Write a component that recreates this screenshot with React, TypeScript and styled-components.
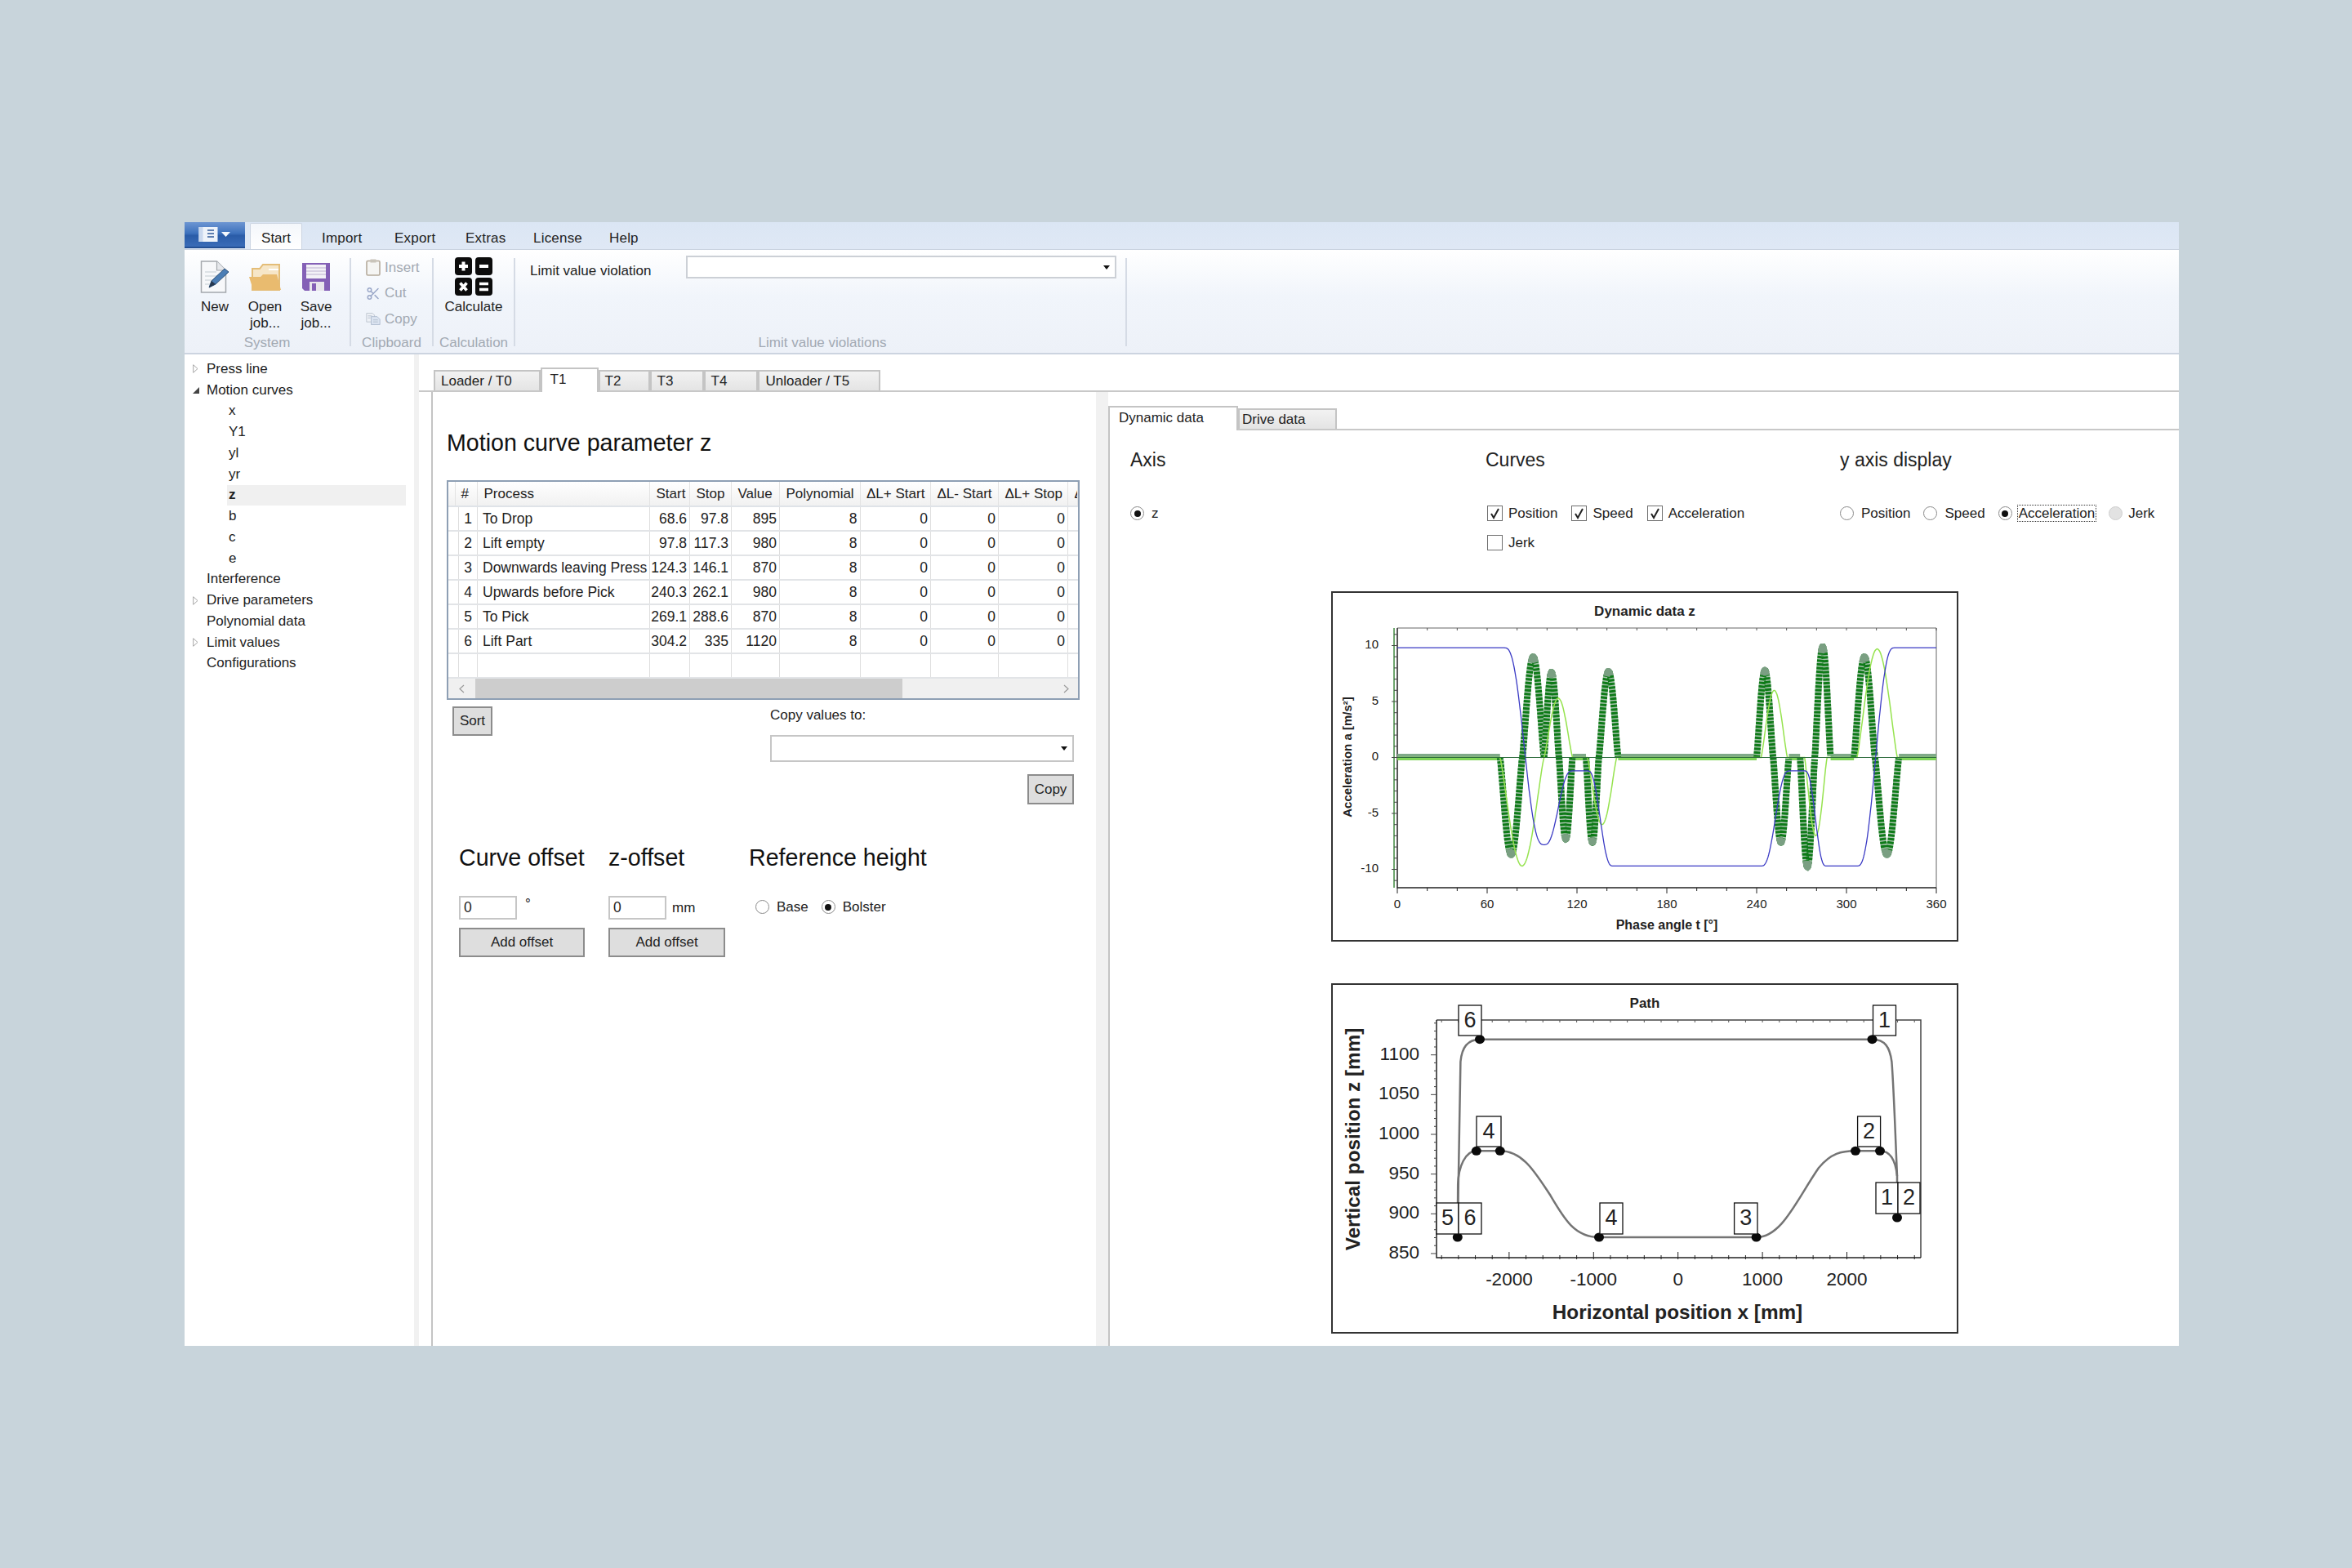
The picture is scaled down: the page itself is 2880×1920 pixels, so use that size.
import React from "react";
import styled, { createGlobalStyle } from "styled-components";
import { Scissors } from "lucide-react";

const GlobalStyle = createGlobalStyle`
  html, body { margin: 0; padding: 0; }
  body { font-family: "Liberation Sans", Arial, sans-serif; color: #222; font-size: 17px; }
  * { box-sizing: border-box; }
`;

const Page = styled.div`
  width: 2880px;
  height: 1920px;
  background: #c8d4db;
  padding: 272px 0 0 226px;
`;

const Window = styled.div`
  width: 2442px;
  height: 1376px;
  background: #fff;
  display: flex;
  flex-direction: column;
  overflow: hidden;
`;

/* ---------- ribbon ---------- */

const MenuStrip = styled.div`
  height: 34px;
  flex: none;
  display: flex;
  align-items: flex-end;
  background: linear-gradient(#dbe6f4, #dfe8f5);
  border-bottom: 1px solid #c9d3e0;
`;

const AppButton = styled.div`
  width: 74px;
  height: 32px;
  align-self: flex-start;
  display: flex;
  align-items: center;
  justify-content: center;
  background: linear-gradient(#6d96d2 0%, #3e72bd 45%, #2a5ca8 55%, #3a6cb8 100%);
  border-bottom: 2px solid #234f93;
`;

const StartTab = styled.div`
  width: 64px;
  height: 32px;
  margin: 0 24px 0 6px;
  padding-top: 5px;
  display: flex;
  align-items: center;
  justify-content: center;
  background: linear-gradient(#f4f7fb, #fff);
  border: 1px solid #ccd5e2;
  border-bottom: none;
  border-radius: 2px 2px 0 0;
`;

const MenuItem = styled.div<{ $width: number }>`
  width: ${(p) => p.$width}px;
  height: 32px;
  padding-top: 5px;
  display: flex;
  align-items: center;
  letter-spacing: 0.2px;
`;

const Ribbon = styled.div`
  height: 128px;
  flex: none;
  display: flex;
  background: linear-gradient(#ffffff 0%, #f1f5fb 45%, #edf1f8 100%);
  border-bottom: 2px solid #ccd4e0;
`;

const RibbonGroup = styled.div<{ $width: number }>`
  width: ${(p) => p.$width}px;
  flex: none;
  display: flex;
  flex-direction: column;
`;

const GroupBody = styled.div<{ $pad?: string }>`
  height: 102px;
  flex: none;
  display: flex;
  padding: ${(p) => p.$pad || "0"};
`;

const GroupLabel = styled.div<{ $pad?: number }>`
  height: 24px;
  line-height: 24px;
  text-align: center;
  color: #a2a9b3;
  padding-left: ${(p) => p.$pad || 0}px;
`;

const GroupSeparator = styled.div`
  width: 2px;
  flex: none;
  margin: 10px 0 8px;
  background: #d5dbe5;
`;

const BigButton = styled.div<{ $width: number }>`
  width: ${(p) => p.$width}px;
  flex: none;
  padding-top: 9px;
  display: flex;
  flex-direction: column;
  align-items: center;
  text-align: center;
  line-height: 20px;
`;

const BigIcon = styled.div`
  height: 47px;
  margin-bottom: 4px;
  display: flex;
  align-items: center;
`;

const SmallList = styled.div`
  display: flex;
  flex-direction: column;
`;

const SmallRow = styled.div`
  height: 31.5px;
  display: flex;
  align-items: center;
  gap: 5px;
  color: #a3a9b2;
`;

const SmallIcon = styled.span`
  width: 18px;
  height: 22px;
  display: flex;
  align-items: center;
  justify-content: center;
`;

const LimitLabel = styled.div`
  width: 191px;
  margin: 5px 0 0 18px;
  flex: none;
  height: 28px;
  line-height: 28px;
`;

const RibbonCombo = styled.div`
  width: 527px;
  height: 28px;
  background: #fff;
  border: 2px solid #ccd0d6;
  display: flex;
  align-items: center;
  justify-content: flex-end;
  padding-right: 6px;
`;

const DropArrow = styled.span`
  width: 0;
  height: 0;
  border-left: 4px solid transparent;
  border-right: 4px solid transparent;
  border-top: 5px solid #111;
`;

/* ---------- tree ---------- */

const Main = styled.div`
  flex: 1;
  display: flex;
  min-height: 0;
`;

const TreePane = styled.div`
  width: 281px;
  flex: none;
  padding-top: 5px;
`;

const TreeRow = styled.div<{ $sub?: boolean; $selected?: boolean }>`
  height: 25.75px;
  display: flex;
  align-items: center;
  margin: ${(p) => (p.$sub ? "0 10px 0 52px" : "0")};
  padding-left: ${(p) => (p.$sub ? 2 : 10)}px;
  background: ${(p) => (p.$selected ? "#f0f0f0" : "transparent")};
  font-weight: ${(p) => (p.$selected ? 700 : 400)};
`;

const TreeArrowSlot = styled.span`
  width: 17px;
  flex: none;
  display: flex;
  align-items: center;
`;

const Splitter = styled.div<{ $width: number }>`
  width: ${(p) => p.$width}px;
  flex: none;
  background: #f1f1f1;
`;

/* ---------- tabs ---------- */

const Workspace = styled.div`
  flex: 1;
  min-width: 0;
  display: flex;
  flex-direction: column;
`;

const TabBar = styled.div<{ $height: number; $pad?: number }>`
  height: ${(p) => p.$height}px;
  flex: none;
  display: flex;
  align-items: flex-end;
  padding-left: ${(p) => p.$pad || 0}px;
  border-bottom: 2px solid #c8c8c8;
`;

const Tab = styled.div<{ $active?: boolean; $width: number; $pad: number }>`
  width: ${(p) => p.$width}px;
  height: ${(p) => (p.$active ? 30 : 25)}px;
  flex: none;
  display: flex;
  align-items: center;
  padding-bottom: ${(p) => (p.$active ? 3 : 0)}px;
  padding-left: ${(p) => p.$pad}px;
  margin-bottom: ${(p) => (p.$active ? -2 : 0)}px;
  background: ${(p) => (p.$active ? "#fff" : "linear-gradient(#f2f2f2, #e4e4e4)")};
  border: 2px solid #c4c4c4;
  border-bottom: ${(p) => (p.$active ? "none" : "0")};
  position: relative;
`;

const Panes = styled.div`
  flex: 1;
  display: flex;
  min-height: 0;
`;

/* ---------- left pane ---------- */

const LeftPane = styled.div`
  width: 814px;
  margin-left: 15px;
  flex: none;
  padding: 42px 0 0 17px;
  border-left: 2px solid #c4c4c4;
`;

const PageTitle = styled.div`
  font-size: 28.6px;
  line-height: 40px;
  color: #111;
  margin-bottom: 26px;
`;

const ParamTable = styled.div`
  width: 775px;
  height: 269px;
  border: 2px solid #8e9fb4;
  overflow: hidden;
  display: flex;
  flex-direction: column;
`;

const columns = "8px 28px 211px 49px 51px 59px 98.5px 86.5px 83px 85px 12px";

const HeaderRow = styled.div`
  height: 31px;
  flex: none;
  display: grid;
  grid-template-columns: ${columns};
  background: linear-gradient(#fff, #f1f1f1);
  border-bottom: 2px solid #dfe3e8;
`;

const HeaderCell = styled.div`
  display: flex;
  align-items: center;
  padding: 1px 0 0 7.5px;
  white-space: nowrap;
  overflow: hidden;
  border-right: 1px solid #e3e3e3;
`;

const BodyRow = styled.div`
  height: 30px;
  flex: none;
  display: grid;
  grid-template-columns: ${columns};
  border-bottom: 2px solid #e2e4e7;
  &:last-of-type { border-bottom: none; }
`;

const Cell = styled.div<{ $right?: boolean }>`
  display: flex;
  align-items: center;
  justify-content: ${(p) => (p.$right ? "flex-end" : "flex-start")};
  padding: 1px ${(p) => (p.$right ? 3 : 6)}px 0;
  font-size: 17.5px;
  white-space: nowrap;
  overflow: hidden;
  border-right: 1.5px solid #dedede;
`;

const RowNumber = styled(Cell)`
  padding-right: 6px;
`;

const ScrollBar = styled.div`
  height: 25px;
  flex: none;
  display: flex;
  align-items: stretch;
  background: #f0f0f0;
`;

const ScrollEnd = styled.div`
  width: 33px;
  flex: none;
  display: flex;
  align-items: center;
  justify-content: center;
`;

const ScrollThumb = styled.div`
  width: 523px;
  flex: none;
  background: #cdcdcd;
`;

const ScrollTrack = styled.div`
  flex: 1;
`;

const ScrollEndRight = styled(ScrollEnd)`
  width: 30px;
`;

const TableActions = styled.div`
  width: 775px;
  margin-top: 8px;
  padding: 0 7px;
  display: flex;
  justify-content: space-between;
  align-items: flex-start;
`;

const GreyButton = styled.div<{ $width: number; $height?: number }>`
  width: ${(p) => p.$width}px;
  height: ${(p) => p.$height || 36}px;
  flex: none;
  display: flex;
  align-items: center;
  justify-content: center;
  background: #dedede;
  border: 2px solid #8c8c8c;
`;

const CopyColumn = styled.div`
  width: 372px;
  display: flex;
  flex-direction: column;
  align-items: flex-end;
`;

const CopyLabel = styled.div`
  align-self: flex-start;
  line-height: 22px;
`;

const CopyCombo = styled.div`
  width: 372px;
  height: 33px;
  margin: 13px 0 15px;
  border: 2px solid #c6c6c6;
  display: flex;
  align-items: center;
  justify-content: flex-end;
  padding-right: 6px;
`;

const OffsetSection = styled.div`
  margin-top: 47px;
  padding-left: 15px;
  display: grid;
  grid-template-columns: 183px 172px auto;
`;

const OffsetColumn = styled.div`
  display: flex;
  flex-direction: column;
`;

const SectionTitle = styled.div`
  font-size: 28.6px;
  line-height: 36px;
  color: #111;
  white-space: nowrap;
`;

const InputRow = styled.div<{ $indent?: number }>`
  height: 29px;
  margin: 29px 0 10px;
  padding-left: ${(p) => p.$indent || 0}px;
  display: flex;
  align-items: center;
`;

const NumberBox = styled.div`
  width: 71px;
  height: 29px;
  padding-left: 4px;
  display: flex;
  align-items: center;
  font-size: 17.5px;
  border: 2px solid #c6c6c6;
`;

const Unit = styled.div<{ $gap: number; $up?: number }>`
  margin-left: ${(p) => p.$gap}px;
  margin-top: ${(p) => p.$up || 0}px;
`;

const RadioGroup = styled.div`
  display: flex;
  align-items: center;
  gap: 16px;
  margin-top: -2px;
`;

/* ---------- radio & checkbox ---------- */

const ChoiceLabel = styled.label<{ $gap?: number; $block?: boolean }>`
  display: flex;
  align-items: center;
  gap: ${(p) => p.$gap || 9}px;
  height: 19px;
  white-space: nowrap;
  flex-basis: ${(p) => (p.$block ? "100%" : "auto")};
`;

const RadioDot = styled.span<{ $checked?: boolean; $disabled?: boolean }>`
  width: 17px;
  height: 17px;
  flex: none;
  border-radius: 50%;
  border: 1.5px solid ${(p) => (p.$disabled ? "#cfcfcf" : "#8a8a8a")};
  background: ${(p) => (p.$disabled ? "#e2e2e2" : "#fff")};
  display: flex;
  align-items: center;
  justify-content: center;
  &::after {
    content: "";
    width: 8px;
    height: 8px;
    border-radius: 50%;
    background: ${(p) => (p.$checked ? "#111" : "transparent")};
  }
`;

const CheckSquare = styled.span`
  width: 19px;
  height: 19px;
  flex: none;
  border: 1.5px solid #6f6f6f;
  background: #fff;
  display: flex;
  align-items: center;
  justify-content: center;
`;

const FocusText = styled.span`
  padding: 0 1px;
  line-height: 19px;
  outline: 1px dotted #333;
`;

/* ---------- right pane ---------- */

const RightPane = styled.div`
  flex: 1;
  min-width: 0;
  margin-top: 17px;
  display: flex;
  flex-direction: column;
`;

const RightContent = styled.div`
  flex: 1;
  border-left: 2px solid #c4c4c4;
  padding: 20px 0 0 25px;
`;

const ControlGrid = styled.div`
  height: 127px;
  display: grid;
  grid-template-columns: 435px 434px 415px;
`;

const ControlHeading = styled.div`
  font-size: 23px;
  line-height: 32px;
  color: #222;
`;

const ChoiceRow = styled.div<{ $indent?: number; $gap?: number }>`
  margin: 40px 0 0 ${(p) => p.$indent || 0}px;
  display: flex;
  flex-wrap: wrap;
  gap: 17px ${(p) => p.$gap || 17}px;
`;

const ChartStack = styled.div`
  margin: 50px 0 0 246px;
  display: flex;
  flex-direction: column;
  gap: 51px;
`;

const ChartCard = styled.div`
  width: 768px;
  height: 429px;
  border: 2px solid #333;
  background: #fff;
  svg {
    display: block;
  }
  text {
    font-family: "Liberation Sans", Arial, sans-serif;
    fill: #222;
  }
`;

/* ---------- drawings ---------- */

const AppIcon = () => (
  <svg width="40" height="20" viewBox="0 0 40 20">
    <rect x="0.5" y="1" width="23" height="18" fill="#eef3fa" />
    <rect x="0.5" y="1" width="5" height="18" fill="#c9d8ee" />
    <rect x="11" y="4" width="8" height="2" fill="#5f7fb0" />
    <rect x="11" y="8" width="8" height="2" fill="#5f7fb0" />
    <rect x="11" y="12" width="8" height="2" fill="#5f7fb0" />
    <path d="M28 7h11l-5.5 6z" fill="#f4f8fd" />
  </svg>
);

const NewIcon = () => (
  <svg width="36" height="40" viewBox="0 0 36 40">
    <path d="M1.5 1h19l11 11v27h-30z" fill="#f7f8fa" stroke="#a4a8ad" strokeWidth="1.5" />
    <path d="M20.5 1v11h11" fill="#e6e8ec" stroke="#a4a8ad" strokeWidth="1.2" />
    <path d="M6 14h14M6 19h20M6 24h14M6 29h12" stroke="#d5dae0" strokeWidth="1.5" />
    <path d="M11 33l3-8 16-15 5 4-16 15z" fill="#4c7eb5" stroke="#2c5078" strokeWidth="1" />
    <path d="M11 33l3-8 5 4z" fill="#27384f" />
  </svg>
);

const FolderIcon = () => (
  <svg width="40" height="34" viewBox="0 0 40 34">
    <path d="M4 33V7h9l4-5h20v31z" fill="#f6e6c8" stroke="#e4bd78" strokeWidth="2" />
    <path d="M24 8h12" stroke="#fff" strokeWidth="2" />
    <path d="M0 17h14l3-3h17l5 19H5z" fill="#e9bb6f" />
  </svg>
);

const SaveIcon = () => (
  <svg width="34" height="34" viewBox="0 0 34 34">
    <path d="M0 0h34v34H3l-3-3z" fill="#8460b6" />
    <rect x="5" y="2" width="24" height="17" fill="#f3f1f7" />
    <path d="M5 6h24M5 10h24M5 14h24" stroke="#cfc6dd" strokeWidth="1.3" />
    <rect x="9" y="23" width="18" height="11" fill="#e8e6ec" />
    <rect x="12" y="25" width="5" height="9" fill="#8460b6" />
  </svg>
);

const CalcIcon = () => (
  <svg width="46" height="47" viewBox="0 0 46 47">
    <rect x="0" y="0" width="21" height="22" rx="4" fill="#0c0c0c" />
    <rect x="25" y="0" width="21" height="22" rx="4" fill="#0c0c0c" />
    <rect x="0" y="25" width="21" height="22" rx="4" fill="#0c0c0c" />
    <rect x="25" y="25" width="21" height="22" rx="4" fill="#0c0c0c" />
    <path d="M5 11h11M10.500 5.500v11" stroke="#fff" strokeWidth="4" />
    <path d="M30 11h11" stroke="#fff" strokeWidth="4" />
    <path d="M6.500 31.500l8 9M14.500 31.500l-8 9" stroke="#fff" strokeWidth="3.600" />
    <path d="M30 32.500h11M30 39.500h11" stroke="#fff" strokeWidth="3.600" />
  </svg>
);

const InsertIcon = () => (
  <svg width="18" height="21" viewBox="0 0 18 21">
    <rect x="1" y="2.500" width="16" height="17.500" rx="1.500" fill="#f5f5f3" stroke="#b5aa9b" strokeWidth="1.600" />
    <rect x="5.500" y="0.500" width="7" height="4" fill="#c9c4ba" />
  </svg>
);

const CopyIcon = () => (
  <svg width="22" height="19" viewBox="0 0 22 19">
    <path d="M1 1h9l3 3v10H1z" fill="#eef1f6" stroke="#b7bfca" />
    <path d="M8 6h9l4 4v8H8z" fill="#dbe4f1" stroke="#a9b7cb" />
    <path d="M3 5h6M3 8h4M11 11h7M11 14h7" stroke="#aeb9c9" />
  </svg>
);

const CollapsedArrow = () => (
  <svg width="7" height="11" viewBox="0 0 7 11">
    <path d="M0.700 0.700L6 5.500 0.700 10.300z" fill="#fff" stroke="#a6a6a6" />
  </svg>
);

const ExpandedArrow = () => (
  <svg width="8" height="8" viewBox="0 0 8 8">
    <path d="M8 0v8H0z" fill="#444" />
  </svg>
);

const CheckMark = () => (
  <svg width="15" height="15" viewBox="0 0 15 15">
    <path d="M3 8l3 5 6-11" fill="none" stroke="#222" strokeWidth="2" />
  </svg>
);

const ChevronGlyph = ({ dir }: { dir: "l" | "r" }) => (
  <svg width="7" height="11" viewBox="0 0 7 11">
    <path d={dir === "l" ? "M6 1L1 5.500 6 10" : "M1 1l5 4.500L1 10"} fill="none" stroke="#9a9a9a" strokeWidth="1.200" />
  </svg>
);

/* ---------- chart maths ---------- */

const tx = (t: number) => 81 + (t * 660) / 360;
const ay = (a: number) => 203.5 - a * 13.7;

const ease = (u: number) => u * u * u * (u * (6 * u - 15) + 10);

const positionKnots: [number, number][] = [
  [0, 9.8], [71.5, 9.8], [98, -7.8], [117, -1.2], [127, -1.2], [144, -9.7], [243, -9.7],
  [262, -1.2], [272, -1.2], [286.5, -9.7], [307, -9.7], [332, 9.8], [360, 9.8],
];

const positionAt = (t: number) => {
  for (let i = 0; i < positionKnots.length - 1; i++) {
    const [t0, v0] = positionKnots[i];
    const [t1, v1] = positionKnots[i + 1];
    if (t <= t1) return v0 + (v1 - v0) * ease((t - t0) / (t1 - t0));
  }
  return 9.8;
};

type Lobe = [number, number, number];

const speedLobes: Lobe[] = [
  [68.6, 98, -9.7], [98, 117, 5.3], [127, 146.5, -6], [243, 260.5, 6],
  [272, 287, -7], [307, 334, 9.7],
];

const accelLobes: Lobe[] = [
  [68.6, 83.5, -8.7], [83.5, 98, 9], [98, 108, 7.6], [108, 117, -7.3],
  [126, 134.6, -7.6], [134.6, 147.5, 7.7], [240, 251, 7.8], [251, 261.5, -7.6],
  [269, 278.8, -9.8], [278.8, 289.4, 9.9], [305, 319, 9], [319, 335, -8.7],
];

const lobeAt = (lobes: Lobe[], t: number) => {
  for (const [t0, t1, peak] of lobes) {
    if (t >= t0 && t <= t1) {
      // rounding can push sin just below zero at the lobe's end
      const s = Math.max(0, Math.sin((Math.PI * (t - t0)) / (t1 - t0)));
      return peak * Math.pow(s, 1.2);
    }
  }
  return 0;
};

const curvePath = (fn: (t: number) => number, from = 0, to = 360, step = 0.5) => {
  let d = "";
  for (let t = from; t <= to; t += step) {
    d += `${d ? "L" : "M"}${tx(t).toFixed(1)} ${ay(fn(t)).toFixed(1)}`;
  }
  return d;
};

const lobeSegment = ([t0, t1, peak]: Lobe, a: number, b: number) =>
  curvePath((t) => lobeAt([[t0, t1, peak]], t), t0 + (t1 - t0) * a, t0 + (t1 - t0) * b, 0.1);

const range = (from: number, to: number, step: number) => {
  const out: number[] = [];
  for (let v = from; v <= to + 0.001; v += step) out.push(v);
  return out;
};

const flatBands: [number, number][] = [
  [0, 68.6], [117, 126], [147.5, 240], [261.5, 269], [289.4, 305], [335, 360],
];

const DynamicChart = () => (
  <ChartCard>
    <svg width="764" height="425" viewBox="2 2 764 425">
      <text x="384" y="24" textAnchor="middle" dominantBaseline="central" fontSize="17" fontWeight="700">
        Dynamic data z
      </text>
      <path d="M81 45H741V363" fill="none" stroke="#666" strokeWidth="1" />
      <path d="M77 45V363" stroke="#3f8a3f" strokeWidth="1.500" />
      <path d="M81 45V363H741" fill="none" stroke="#222" strokeWidth="1.500" />
      {range(0, 360, 20).map((t) => (
        <g key={t}>
          <path d={`M${tx(t)} 363v${t % 60 === 0 ? 7 : 4}`} stroke="#222" />
          <path d={`M${tx(t)} 45v3`} stroke="#555" />
        </g>
      ))}
      {range(-11, 11, 1).map((a) => (
        <path key={a} d={`M81 ${ay(a)}h${a % 5 === 0 ? -7 : -4}`} stroke="#444" />
      ))}
      {range(0, 360, 60).map((t) => (
        <text key={t} x={tx(t)} y="382.500" textAnchor="middle" dominantBaseline="central" fontSize="15">
          {t}
        </text>
      ))}
      {[10, 5, 0, -5, -10].map((a) => (
        <text key={a} x="58" y={ay(a) - 2} textAnchor="end" dominantBaseline="central" fontSize="15">
          {a}
        </text>
      ))}
      <text x="411" y="408.500" textAnchor="middle" dominantBaseline="central" fontSize="16" fontWeight="700">
        Phase angle t [°]
      </text>
      <text
        x="19"
        y="203"
        textAnchor="middle"
        dominantBaseline="central"
        fontSize="15"
        fontWeight="700"
        transform="rotate(-90 19 203)"
      >
        Acceleration a [m/s²]
      </text>

      {flatBands.map(([a, b]) => (
        <g key={a}>
          <path d={`M${tx(a)} 201.500H${tx(b)}`} stroke="#7fa988" strokeWidth="5" />
          <path d={`M${tx(a)} 205.500H${tx(b)}`} stroke="#7fd45a" strokeWidth="3" />
        </g>
      ))}
      {accelLobes.map((l) => (
        <g key={l[0]} fill="none">
          <path d={lobeSegment(l, 0, 1)} stroke="#a7c4ac" strokeWidth="8" />
          <path d={lobeSegment(l, 0, 1)} stroke="#0e7a18" strokeWidth="8" strokeDasharray="3 1.500" />
          <path d={lobeSegment(l, 0.4, 0.6)} stroke="#7a9f82" strokeWidth="8" />
        </g>
      ))}
      <path d={curvePath((t) => lobeAt(speedLobes, t))} fill="none" stroke="#96e34f" strokeWidth="1.500" />
      <path d={curvePath(positionAt)} fill="none" stroke="#3a3ac4" strokeWidth="1.300" />
      <path d="M81 203.500H741" stroke="#2c6b3c" strokeWidth="1.200" />
    </svg>
  </ChartCard>
);

const px = (x: number) => 424.7 + x * 0.1034;
const pz = (z: number) => 87.7 + (1100 - z) * 0.973;

const pathDots: [number, number][] = [
  [182, 68.7], [662.5, 68.7], [177.8, 205.3], [206.8, 205.3], [642, 205.3],
  [672, 205.3], [154.8, 311], [328, 311], [520.6, 311], [693, 287],
];

const pathTags: [number, number, number, number, string][] = [
  [156, 27, 28, 37, "6"], [663.5, 27, 28, 37, "1"], [178, 163, 30, 37, "4"], [644.6, 163, 28, 37, "2"],
  [667, 244, 27, 38, "1"], [694, 244, 27, 38, "2"], [129, 269, 27, 38, "5"], [156, 269, 28, 38, "6"],
  [329, 269, 28, 38, "4"], [493.6, 269, 28.4, 38, "3"],
];

const PathChart = () => (
  <ChartCard>
    <svg width="764" height="425" viewBox="2 2 764 425">
      <text x="384" y="24" textAnchor="middle" dominantBaseline="central" fontSize="17" fontWeight="700">
        Path
      </text>
      <path d="M129 45H722V336" fill="none" stroke="#444" strokeWidth="1.500" />
      <path d="M129 45V336H722" fill="none" stroke="#222" strokeWidth="1.500" />
      {range(-2800, 2800, 200).map((x) => (
        <g key={x}>
          <path d={`M${px(x)} ${x % 1000 === 0 ? 329 : 333}V338`} stroke="#222" />
          <path d={`M${px(x)} 45v3`} stroke="#555" />
        </g>
      ))}
      {range(850, 1140, 10).map((z) => (
        <path key={z} d={`M129 ${pz(z)}h${z % 50 === 0 ? -7 : -3}`} stroke="#444" />
      ))}
      {[-2000, -1000, 0, 1000, 2000].map((x) => (
        <text key={x} x={px(x)} y="362.500" textAnchor="middle" dominantBaseline="central" fontSize="22.500">
          {x}
        </text>
      ))}
      {[1100, 1050, 1000, 950, 900, 850].map((z) => (
        <text key={z} x="108" y={pz(z) - 1.5} textAnchor="end" dominantBaseline="central" fontSize="22.500">
          {z}
        </text>
      ))}
      <text x="424" y="402.500" textAnchor="middle" dominantBaseline="central" fontSize="24.300" fontWeight="700">
        Horizontal position x [mm]
      </text>
      <text
        x="26"
        y="191"
        textAnchor="middle"
        dominantBaseline="central"
        fontSize="24.300"
        fontWeight="700"
        transform="rotate(-90 26 191)"
      >
        Vertical position z [mm]
      </text>

      <g fill="none" stroke="#747474" strokeWidth="2.500">
        <path d="M182 68.700L662.500 68.700C678 68.700 684 78 686.400 96C689 130 691 190 693 236L693 287" />
        <path d="M154.800 311L155.800 246L158.400 96C160 78 168 68.700 182 68.700" />
        <path d="M154.800 311L155.200 246C156 225 164 205.300 177.800 205.300L206.800 205.300C235 205.300 250 232 268 259C285 288 298 311 328 311L520.600 311C552 311 570 265 597 226C612 208 625 205.300 642 205.300L672 205.300C684 205.300 691 216 693 236" />
      </g>
      {pathDots.map(([x, y]) => (
        <ellipse key={`${x}-${y}`} cx={x} cy={y} rx="6" ry="5.500" fill="#0a0a0a" />
      ))}
      {pathTags.map(([x, y, w, h, label]) => (
        <g key={`${x}-${y}`}>
          <rect x={x} y={y} width={w} height={h} fill="#fff" stroke="#111" strokeWidth="1.300" />
          <text x={x + w / 2} y={y + h / 2 - 1} textAnchor="middle" dominantBaseline="central" fontSize="27">
            {label}
          </text>
        </g>
      ))}
    </svg>
  </ChartCard>
);

/* ---------- data ---------- */

const menuItems: [string, number][] = [
  ["Import", 89],
  ["Export", 87],
  ["Extras", 83],
  ["License", 93],
  ["Help", 60],
];

type TreeItem = { label: string; arrow?: "open" | "closed"; sub?: boolean; selected?: boolean };

const treeItems: TreeItem[] = [
  { label: "Press line", arrow: "closed" },
  { label: "Motion curves", arrow: "open" },
  { label: "x", sub: true },
  { label: "Y1", sub: true },
  { label: "yl", sub: true },
  { label: "yr", sub: true },
  { label: "z", sub: true, selected: true },
  { label: "b", sub: true },
  { label: "c", sub: true },
  { label: "e", sub: true },
  { label: "Interference" },
  { label: "Drive parameters", arrow: "closed" },
  { label: "Polynomial data" },
  { label: "Limit values", arrow: "closed" },
  { label: "Configurations" },
];

const curveTabs: [string, number, number][] = [
  ["Loader / T0", 130.5, 7],
  ["T1", 71, 10],
  ["T2", 63, 6],
  ["T3", 66, 7],
  ["T4", 66, 7],
  ["Unloader / T5", 150, 8],
];

const headers = ["", "#", "Process", "Start", "Stop", "Value", "Polynomial", "ΔL+ Start", "ΔL- Start", "ΔL+ Stop", "ΔL- Stop"];

const rows: [string, string, string, string][] = [
  ["To Drop", "68.6", "97.8", "895"],
  ["Lift empty", "97.8", "117.3", "980"],
  ["Downwards leaving Press", "124.3", "146.1", "870"],
  ["Upwards before Pick", "240.3", "262.1", "980"],
  ["To Pick", "269.1", "288.6", "870"],
  ["Lift Part", "304.2", "335", "1120"],
];

const App = () => {
  return (
    <>
      <GlobalStyle />
      <Page>
        <Window>
          <MenuStrip>
            <AppButton>
              <AppIcon />
            </AppButton>
            <StartTab>Start</StartTab>
            {menuItems.map(([item, width]) => (
              <MenuItem key={item} $width={width}>{item}</MenuItem>
            ))}
          </MenuStrip>

          <Ribbon>
            <RibbonGroup $width={202}>
              <GroupBody $pad="0 0 0 6px">
                <BigButton $width={62}>
                  <BigIcon><NewIcon /></BigIcon>
                  New
                </BigButton>
                <BigButton $width={61}>
                  <BigIcon><FolderIcon /></BigIcon>
                  Open job...
                </BigButton>
                <BigButton $width={64}>
                  <BigIcon><SaveIcon /></BigIcon>
                  Save job...
                </BigButton>
              </GroupBody>
              <GroupLabel>System</GroupLabel>
            </RibbonGroup>
            <GroupSeparator />
            <RibbonGroup $width={99}>
              <GroupBody $pad="6px 0 0 18px">
                <SmallList>
                  <SmallRow><SmallIcon><InsertIcon /></SmallIcon>Insert</SmallRow>
                  <SmallRow><SmallIcon><Scissors size={19} color="#9aa7c8" strokeWidth={2} /></SmallIcon>Cut</SmallRow>
                  <SmallRow><SmallIcon><CopyIcon /></SmallIcon>Copy</SmallRow>
                </SmallList>
              </GroupBody>
              <GroupLabel>Clipboard</GroupLabel>
            </RibbonGroup>
            <GroupSeparator />
            <RibbonGroup $width={98}>
              <GroupBody $pad="0">
                <BigButton $width={98}>
                  <BigIcon><CalcIcon /></BigIcon>
                  Calculate
                </BigButton>
              </GroupBody>
              <GroupLabel>Calculation</GroupLabel>
            </RibbonGroup>
            <GroupSeparator />
            <RibbonGroup $width={747}>
              <GroupBody $pad="7px 0 0">
                <LimitLabel>Limit value violation</LimitLabel>
                <RibbonCombo><DropArrow /></RibbonCombo>
              </GroupBody>
              <GroupLabel $pad={5}>Limit value violations</GroupLabel>
            </RibbonGroup>
            <GroupSeparator />
          </Ribbon>

          <Main>
            <TreePane>
              {treeItems.map((item) => (
                <TreeRow key={item.label} $sub={item.sub} $selected={item.selected}>
                  {!item.sub && (
                    <TreeArrowSlot>
                      {item.arrow === "closed" && <CollapsedArrow />}
                      {item.arrow === "open" && <ExpandedArrow />}
                    </TreeArrowSlot>
                  )}
                  {item.label}
                </TreeRow>
              ))}
            </TreePane>
            <Splitter $width={6} />

            <Workspace>
              <TabBar $height={46} $pad={18}>
                {curveTabs.map(([label, width, pad]) => (
                  <Tab key={label} $active={label === "T1"} $width={width} $pad={pad}>
                    {label}
                  </Tab>
                ))}
              </TabBar>

              <Panes>
                <LeftPane>
                  <PageTitle>Motion curve parameter z</PageTitle>
                  <ParamTable>
                    <HeaderRow>
                      {headers.map((h, i) => (
                        <HeaderCell key={i}>{h}</HeaderCell>
                      ))}
                    </HeaderRow>
                    {rows.map(([name, start, stop, value], i) => (
                      <BodyRow key={name}>
                        <Cell />
                        <RowNumber $right>{i + 1}</RowNumber>
                        <Cell>{name}</Cell>
                        <Cell $right>{start}</Cell>
                        <Cell $right>{stop}</Cell>
                        <Cell $right>{value}</Cell>
                        <Cell $right>8</Cell>
                        <Cell $right>0</Cell>
                        <Cell $right>0</Cell>
                        <Cell $right>0</Cell>
                        <Cell />
                      </BodyRow>
                    ))}
                    <BodyRow>
                      {headers.map((h, i) => (
                        <Cell key={i} />
                      ))}
                    </BodyRow>
                    <ScrollBar>
                      <ScrollEnd><ChevronGlyph dir="l" /></ScrollEnd>
                      <ScrollThumb />
                      <ScrollTrack />
                      <ScrollEndRight><ChevronGlyph dir="r" /></ScrollEndRight>
                    </ScrollBar>
                  </ParamTable>

                  <TableActions>
                    <GreyButton $width={49}>Sort</GreyButton>
                    <CopyColumn>
                      <CopyLabel>Copy values to:</CopyLabel>
                      <CopyCombo><DropArrow /></CopyCombo>
                      <GreyButton $width={57} $height={37}>Copy</GreyButton>
                    </CopyColumn>
                  </TableActions>

                  <OffsetSection>
                    <OffsetColumn>
                      <SectionTitle>Curve offset</SectionTitle>
                      <InputRow>
                        <NumberBox>0</NumberBox>
                        <Unit $gap={10} $up={-10}>°</Unit>
                      </InputRow>
                      <GreyButton $width={154}>Add offset</GreyButton>
                    </OffsetColumn>
                    <OffsetColumn>
                      <SectionTitle>z-offset</SectionTitle>
                      <InputRow>
                        <NumberBox>0</NumberBox>
                        <Unit $gap={7}>mm</Unit>
                      </InputRow>
                      <GreyButton $width={143}>Add offset</GreyButton>
                    </OffsetColumn>
                    <OffsetColumn>
                      <SectionTitle>Reference height</SectionTitle>
                      <InputRow $indent={8}>
                        <RadioGroup>
                          <ChoiceLabel><RadioDot />Base</ChoiceLabel>
                          <ChoiceLabel><RadioDot $checked />Bolster</ChoiceLabel>
                        </RadioGroup>
                      </InputRow>
                    </OffsetColumn>
                  </OffsetSection>
                </LeftPane>

                <Splitter $width={15} />

                <RightPane>
                  <TabBar $height={30}>
                    <Tab $active $width={159} $pad={11}>Dynamic data</Tab>
                    <Tab $width={121} $pad={3}>Drive data</Tab>
                  </TabBar>
                  <RightContent>
                    <ControlGrid>
                      <div>
                        <ControlHeading>Axis</ControlHeading>
                        <ChoiceRow>
                          <ChoiceLabel><RadioDot $checked />z</ChoiceLabel>
                        </ChoiceRow>
                      </div>
                      <div>
                        <ControlHeading>Curves</ControlHeading>
                        <ChoiceRow $indent={2}>
                          <ChoiceLabel $gap={7}><CheckSquare><CheckMark /></CheckSquare>Position</ChoiceLabel>
                          <ChoiceLabel $gap={7}><CheckSquare><CheckMark /></CheckSquare>Speed</ChoiceLabel>
                          <ChoiceLabel $gap={7}><CheckSquare><CheckMark /></CheckSquare>Acceleration</ChoiceLabel>
                          <ChoiceLabel $gap={7} $block><CheckSquare />Jerk</ChoiceLabel>
                        </ChoiceRow>
                      </div>
                      <div>
                        <ControlHeading>y axis display</ControlHeading>
                        <ChoiceRow $gap={16}>
                          <ChoiceLabel><RadioDot />Position</ChoiceLabel>
                          <ChoiceLabel><RadioDot />Speed</ChoiceLabel>
                          <ChoiceLabel $gap={7}><RadioDot $checked /><FocusText>Acceleration</FocusText></ChoiceLabel>
                          <ChoiceLabel $gap={7}><RadioDot $disabled />Jerk</ChoiceLabel>
                        </ChoiceRow>
                      </div>
                    </ControlGrid>
                    <ChartStack>
                      <DynamicChart />
                      <PathChart />
                    </ChartStack>
                  </RightContent>
                </RightPane>
              </Panes>
            </Workspace>
          </Main>
        </Window>
      </Page>
    </>
  );
};

export default App;
